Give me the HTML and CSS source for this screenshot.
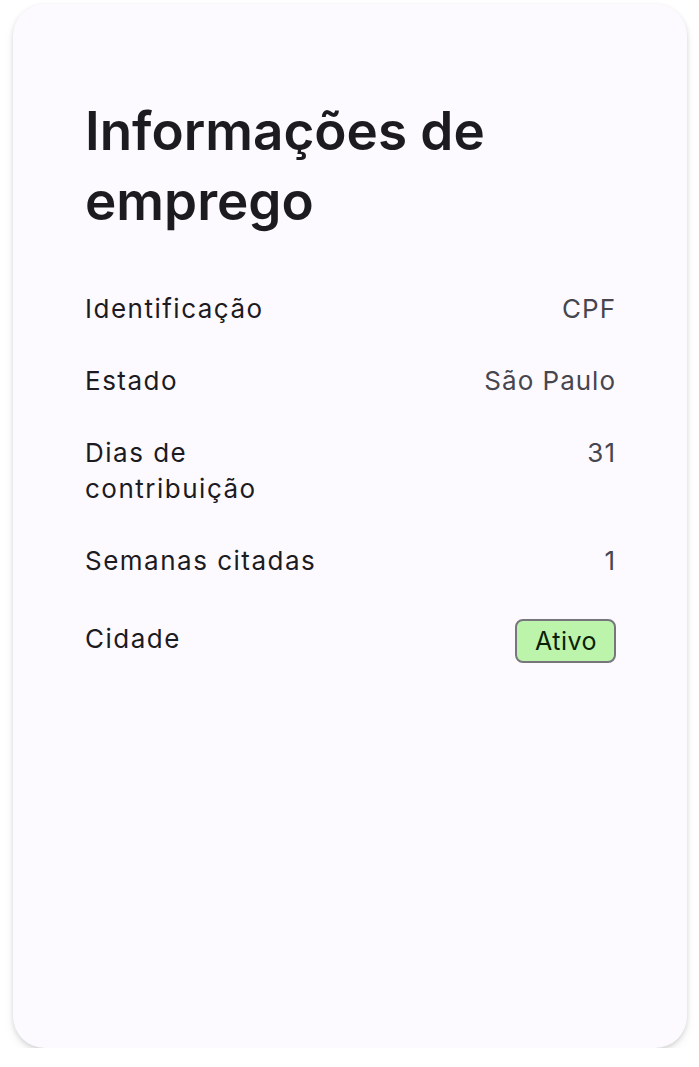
FILE: index.html
```html
<!DOCTYPE html>
<html lang="pt">
<head>
  <meta charset="UTF-8">
  <title>Informações de emprego</title>
  <link rel="stylesheet" href="styles.css">
</head>
<body>
  <div class="card">
    <h1>Informações de emprego</h1>
    <div class="rows">
      <div class="row">
        <span class="label">Identificação</span>
        <span class="value">CPF</span>
      </div>
      <div class="row">
        <span class="label">Estado</span>
        <span class="value">São Paulo</span>
      </div>
      <div class="row">
        <span class="label">Dias de<br>contribuição</span>
        <span class="value">31</span>
      </div>
      <div class="row">
        <span class="label">Semanas citadas</span>
        <span class="value">1</span>
      </div>
      <div class="row center">
        <span class="label">Cidade</span>
        <span class="badge">Ativo</span>
      </div>
    </div>
  </div>
</body>
</html>
```

FILE: styles.css
```css
body {
  margin: 0;
  background: #ffffff;
  font-family: Inter, "Noto Sans", sans-serif;
  padding: 4px 12px 0 13px;
}

.card {
  background: #fcfaff;
  border-radius: 32px;
  box-shadow: 0 2px 5px rgba(0,0,0,0.14), 0 6px 12px rgba(0,0,0,0.05);
  height: 1044px;
  box-sizing: border-box;
  padding: 92px 71px 0 72px;
}

h1 {
  margin: 0 0 55px 0;
  font-size: 53px;
  font-weight: 600;
  line-height: 70px;
  color: #1c1b1f;
}

.rows {
  display: flex;
  flex-direction: column;
  gap: 36px;
}

.row {
  display: flex;
  justify-content: space-between;
  align-items: flex-start;
  font-size: 26px;
  line-height: 36px;
  letter-spacing: 1.5px;
}

.row.center {
  align-items: center;
}

.label {
  color: #1c1b1f;
}

.value {
  color: #47464f;
  letter-spacing: 1px;
}

.badge {
  margin-top: 4px;
  background: #bdf4ac;
  border: 2px solid #77767d;
  border-radius: 8px;
  padding: 2px 17px 2px 18px;
  line-height: 36px;
  letter-spacing: 0.5px;
  font-size: 25px;
  color: #0c1f07;
}
```
